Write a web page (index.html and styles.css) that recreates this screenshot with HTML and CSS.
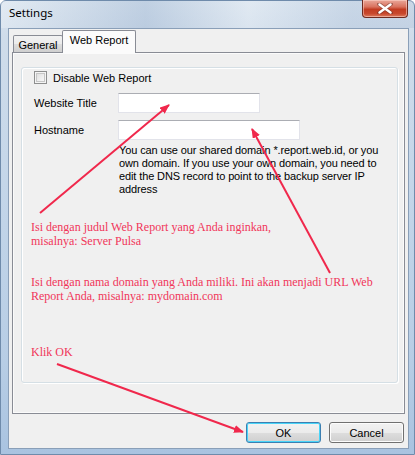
FILE: index.html
```html
<!DOCTYPE html>
<html>
<head>
<meta charset="utf-8">
<link rel="stylesheet" href="styles.css">
</head>
<body>
<div class="window">
  <div class="titlebar">
    <span class="title">Settings</span>
    <div class="close">
      <svg width="16" height="11" viewBox="0 0 16 11"><path d="M2 1 L14 10 M14 1 L2 10" stroke="#5a2a22" stroke-width="4" stroke-linecap="round" opacity="0.45"/><path d="M2.5 1.5 L13.5 9.5 M13.5 1.5 L2.5 9.5" stroke="#ffffff" stroke-width="2.4" stroke-linecap="round"/></svg>
    </div>
  </div>
  <div class="client">
    <div class="tabs">
      <div class="tab">General</div>
      <div class="tab active">Web Report</div>
    </div>
    <div class="page">
      <div class="group">
        <div class="check"><span class="box"></span><span>Disable Web Report</span></div>
        <div class="row first"><span class="lbl">Website Title</span><span class="input w1"></span></div>
        <div class="row"><span class="lbl">Hostname</span><span class="input w2"></span></div>
        <p class="help">You can use our shared domain *.report.web.id, or you own domain. If you use your own domain, you need to edit the DNS record to point to the backup server IP address</p>
        <p class="note n1">Isi dengan judul Web Report yang Anda inginkan,<br>misalnya: Server Pulsa</p>
        <p class="note n2">Isi dengan nama domain yang Anda miliki. Ini akan menjadi URL Web<br>Report Anda, misalnya: mydomain.com</p>
        <p class="note n3">Klik OK</p>
      </div>
    </div>
    <div class="buttons">
      <button class="btn default">OK</button>
      <button class="btn">Cancel</button>
    </div>
  </div>
</div>
<svg class="arrows" width="415" height="455" viewBox="0 0 415 455">
  <defs>
    <marker id="head" markerWidth="10" markerHeight="8" refX="9" refY="4" orient="auto" markerUnits="userSpaceOnUse">
      <path d="M0 0 L10 4 L0 8 Z" fill="#f0284c"/>
    </marker>
  </defs>
  <line x1="40" y1="213" x2="169" y2="105" stroke="#f0284c" stroke-width="2" marker-end="url(#head)"/>
  <line x1="330" y1="273" x2="252" y2="129" stroke="#f0284c" stroke-width="2" marker-end="url(#head)"/>
  <line x1="57" y1="364" x2="243" y2="432" stroke="#f0284c" stroke-width="2" marker-end="url(#head)"/>
</svg>
</body>
</html>
```
FILE: styles.css
```css
html, body {
  margin: 0;
  padding: 0;
}
body {
  width: 415px;
  height: 455px;
  overflow: hidden;
  position: relative;
  font-family: "Liberation Sans", Arial, sans-serif;
  font-size: 11px;
  color: #000;
}
.window {
  width: 415px;
  height: 455px;
  box-sizing: border-box;
  display: flex;
  flex-direction: column;
  background: linear-gradient(180deg, #d9e4ef 0%, #cfdcea 8%, #c4d6e9 40%, #b7cde5 80%, #a9c3e0 100%);
  border: 1px solid #6f8bab;
  border-radius: 6px 6px 0 0;
}
.titlebar {
  height: 27px;
  display: flex;
  align-items: flex-start;
  padding-left: 8px;
  background: linear-gradient(90deg, rgba(255,255,255,0.25), rgba(120,150,190,0.25) 35%, rgba(255,255,255,0.2) 60%, rgba(140,165,200,0.2) 85%);
}
.title {
  font-family: "Noto Sans", "Open Sans", sans-serif;
  font-size: 11.5px;
  line-height: 16px;
  margin-top: 4px;
  color: #000;
}
.close {
  margin-left: auto;
  margin-right: 6px;
  margin-top: -1px;
  width: 46px;
  height: 18px;
  box-sizing: border-box;
  border: 1px solid #6e2a20;
  border-top: none;
  border-radius: 0 0 4px 4px;
  background: linear-gradient(180deg, #e9a89a 0%, #d9735f 40%, #c23c22 55%, #c8482d 80%, #dc7a5e 100%);
  box-shadow: inset 0 0 0 1px rgba(255,220,210,0.5);
  display: flex;
  align-items: center;
  justify-content: center;
}
.client {
  margin-left: 7px;
  width: 401px;
  height: 421px;
  box-sizing: border-box;
  border: 1px solid #8a9fb8;
  background: #f0f0f0;
  display: flex;
  flex-direction: column;
}
.tabs {
  height: 24px;
  display: flex;
  align-items: flex-end;
  padding-left: 4px;
  margin-bottom: -1px;
  position: relative;
  z-index: 1;
}
.tab {
  box-sizing: border-box;
  height: 17px;
  width: 50px;
  margin-bottom: 1px;
  border: 1px solid #898c95;
  border-bottom: none;
  border-radius: 2px 2px 0 0;
  background: linear-gradient(180deg, #f2f2f2 0%, #ebebeb 50%, #dddddd 51%, #cfcfcf 100%);
  text-align: center;
  line-height: 16px;
  padding-top: 1px;
}
.tab.active {
  height: 23px;
  width: 74px;
  margin-left: -1px;
  margin-bottom: 0;
  background: #fbfbfb;
  line-height: 14px;
  padding-top: 2px;
}
.page {
  margin-left: 3px;
  width: 393px;
  height: 362px;
  box-sizing: border-box;
  border: 1px solid #898c95;
  background: #f0f0f0;
  box-shadow: inset 0 0 0 1px #fbfbfb;
  padding-top: 14px;
  padding-left: 8px;
}
.group {
  width: 377px;
  height: 316px;
  box-sizing: border-box;
  border: 1px solid #d5dfe5;
  border-radius: 3px;
  box-shadow: inset 1px 1px 0 #ffffff, 1px 1px 0 #ffffff;
  padding: 3px 0 0 9px;
}
.check {
  display: flex;
  align-items: center;
  height: 13px;
  margin-left: 3px;
  gap: 6px;
}
.box {
  width: 13px;
  height: 13px;
  box-sizing: border-box;
  border: 1px solid #8e8f8f;
  background: linear-gradient(135deg, #d9d9d9 0%, #f0f0f0 60%, #fafafa 100%);
  box-shadow: inset 0 0 0 1px #f4f4f4, inset 0 0 0 2px #c6c6c6;
}
.row {
  display: flex;
  align-items: center;
  margin-left: 3px;
  margin-top: 7px;
  height: 20px;
}
.row.first {
  margin-top: 9px;
}
.lbl {
  width: 84px;
}
.input {
  height: 20px;
  box-sizing: border-box;
  border: 1px solid #e2e3ea;
  border-top-color: #abadb3;
  background: #ffffff;
}
.input.w1 { width: 142px; }
.input.w2 { width: 182px; }
.help {
  margin: 4px 0 0 88px;
  width: 268px;
  line-height: 13px;
  letter-spacing: -0.12px;
}
.note {
  font-family: "Liberation Serif", "Times New Roman", serif;
  font-size: 12px;
  line-height: 14px;
  color: #f0365a;
  margin: 0;
}
.n1 { margin-top: 24px; }
.n2 { margin-top: 27px; }
.n3 { margin-top: 42px; }
.buttons {
  display: flex;
  justify-content: flex-end;
  gap: 8px;
  padding-right: 4px;
  margin-top: 8px;
}
.btn {
  width: 75px;
  height: 21px;
  box-sizing: border-box;
  border: 1px solid #707070;
  border-radius: 3px;
  background: linear-gradient(180deg, #f2f2f2 0%, #ebebeb 50%, #dddddd 51%, #cfcfcf 100%);
  box-shadow: inset 0 0 0 1px #fcfcfc;
  font-family: "Liberation Sans", Arial, sans-serif;
  font-size: 11px;
  color: #000;
  padding: 0;
}
.btn.default {
  border-color: #3c7fb1;
  box-shadow: inset 0 0 0 1px #48d4f8;
}
.arrows {
  position: absolute;
  left: 0;
  top: 0;
  pointer-events: none;
}
```
